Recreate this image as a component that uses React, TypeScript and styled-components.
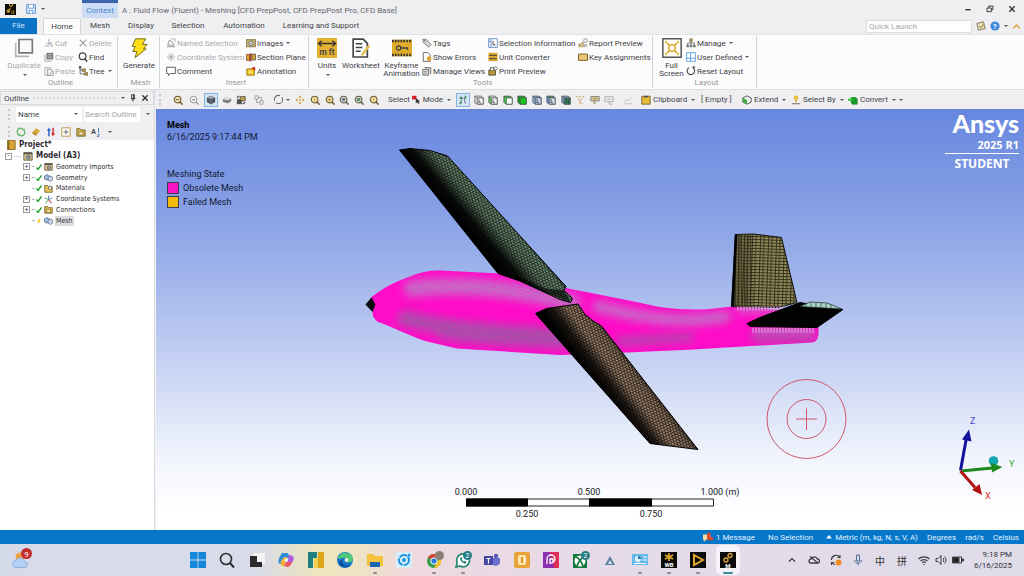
import React from "react";
import styled, { createGlobalStyle, css } from "styled-components";

const GlobalStyle = createGlobalStyle`
  * { box-sizing: border-box; }
  html, body, #root { height: 100%; }
  body { margin: 0; overflow: hidden; }
  body, button, input, select {
    font-family: Roboto, "Noto Sans CJK SC", sans-serif;
    font-size: 8px;
    color: #3f3f46;
  }
  button { border: 0; background: none; padding: 0; margin: 0; white-space: nowrap; }
  ul { list-style: none; margin: 0; padding: 0; }
`;

const GOLD = "#d9a62e";

/* ---------- icons ---------- */

const lens = (color: string, inner: React.ReactNode) => (
  <>
    <circle cx="5.5" cy="5.5" r="4" fill="#f3e3b4" stroke={color} strokeWidth="1.3" />
    <path d="M8.5 8.5 11.5 11.5" stroke={color} strokeWidth="1.8" />
    {inner}
  </>
);

const box = (front: string, top: string, side: string, mark?: React.ReactNode) => (
  <>
    <path d="M1 1.5h7.5l2.5 2v7.5H4L1 9z" fill={side} stroke="#555" strokeWidth=".9" />
    <path d="M1 1.5h7.5l2.5 2H4z" fill={top} stroke="#555" strokeWidth=".7" />
    <path d="M4 3.5h7V11H4z" fill={front} stroke="#555" strokeWidth=".9" />
    {mark}
  </>
);

const cursor = <path d="M6 5v4.5l1.2-1 1 1.8" fill="none" stroke="#333" strokeWidth=".9" />;

const glyphs: Record<string, React.ReactNode> = {
  duplicate: (
    <>
      <path d="M1 3v8h8" fill="none" stroke="#b5b5b5" strokeWidth="1" />
      <path d="M3 .9h8v8H3z" fill="#fafafa" stroke="#77777c" strokeWidth="1" />
    </>
  ),
  cut: <path d="M1 9.5h5M6 1v7M3 7l7-1M8 9.5h3M7 6.500l3 3" fill="none" stroke="#a9a9ad" strokeWidth="1.2" />,
  copy: (
    <>
      <path d="M1 3v8h8" fill="none" stroke="#999" />
      <path d="M3 1h8v8H3z" fill="#77777b" />
      <path d="M4.500 3h5M4.500 5h5M4.500 7h5" stroke="#ccc" strokeWidth=".8" />
    </>
  ),
  paste: (
    <>
      <path d="M1 2h7v9H1z" fill="none" stroke="#a5a5a9" />
      <path d="M4 4h4l3 2v5.500H4z" fill="#f5f5f5" stroke="#8f8f94" />
      <path d="M5 8l2 2 3-4" fill="none" stroke="#999" />
    </>
  ),
  del: <path d="M2 2l8 8M10 2l-8 8" stroke="#9a9a9e" strokeWidth="1.4" />,
  find: (
    <>
      <circle cx="5.500" cy="5" r="4" fill="none" stroke="#444" strokeWidth="1.5" />
      <path d="M8 8l3 3.500" stroke="#444" strokeWidth="1.9" />
    </>
  ),
  tree: (
    <>
      <path d="M2.500 2v7.500h6M2.500 5h4" fill="none" stroke="#555" />
      <path d="M1 0h3v3H1z" fill="#555" />
      <path d="M5 3.500h4v3H5zM8 8h4v3H8z" fill={GOLD} stroke="#555" strokeWidth=".8" />
    </>
  ),
  bolt: <path d="M4 .5h6L8 3.800h2.900L8.600 6.500h1.700L3.700 11.800l1-3.700H2.300l1.500-3H1.900z" fill="#ffe01a" stroke="#7a6c1c" strokeWidth=".6" />,
  named: (
    <>
      <path d="M1 10.500h10M2 8.500l2-6 3 2 3 4z" fill="none" stroke="#98989c" strokeWidth="1.2" />
      <path d="M6 1h5v4" fill="none" stroke="#a8a8ac" />
    </>
  ),
  coord: <path d="M6 1v10M1 6h10M2.500 2.500l7 7M9.500 2.500l-7 7" stroke="#a5a5a9" strokeWidth="1" />,
  comment: <path d="M.8 1.500h10.400v7.500H5.500L3 11.300V9H.8z" fill="#fff" stroke="#555" strokeWidth="1.1" />,
  images: (
    <>
      <path d="M.5 2h11v8.500H.5z" fill="#c9b277" stroke="#7c6a3b" />
      <circle cx="6" cy="6.300" r="2.600" fill="#fff" stroke="#555" />
      <circle cx="6" cy="6.300" r="1" fill="#555" />
    </>
  ),
  section: (
    <>
      <path d="M.5 3h4v7h-4z" fill={GOLD} stroke="#6b2318" strokeWidth=".8" />
      <path d="M4.500 1.500h2v10h-2z" fill="#b4342a" />
      <path d="M7 2.500h4.500v7H7z" fill="#d9a62e" stroke="#444" strokeWidth=".9" />
    </>
  ),
  annotation: (
    <>
      <path d="M1 3.500h9v7.500H1z" fill="#f0c81e" stroke="#8a6c12" />
      <path d="M6 2.500 11 1v5z" fill="#d0382a" />
      <path d="M3 6h4M3 8h5" stroke="#fff6c0" strokeWidth=".9" />
    </>
  ),
  units: (
    <>
      <path d="M0 0h12v12H0z" fill="#e3b232" />
      <path d="M.8 3.300h10.400M2.800 1.600.8 3.300l2 1.700M9.200 1.600l2 1.700-2 1.700" fill="none" stroke="#333" strokeWidth=".8" />
      <text x="6" y="10.400" textAnchor="middle" fontSize="5" fontWeight="600" fill="#444">m ft</text>
    </>
  ),
  worksheet: (
    <>
      <path d="M1.300.7h6l2.500 2.500v8.200H1.300z" fill="#fff" stroke="#444" strokeWidth="1" />
      <path d="M2.800 3.500h4M2.800 5.700h4M2.800 7.900h3" stroke="#444" strokeWidth=".9" />
      <path d="M11 4.500 6.500 10.300" stroke="#e3c04a" strokeWidth="1.400" />
    </>
  ),
  keyframe: (
    <>
      <path d="M0 1h12v10H0z" fill="#e0ac2c" />
      <path d="M0 1.800h12M0 10.200h12" stroke="#333" strokeWidth="1.500" strokeDasharray="1 .7" />
      <circle cx="4" cy="6" r="1.300" fill="none" stroke="#444" strokeWidth=".8" />
      <path d="M5.300 6h4v1.200" fill="none" stroke="#444" strokeWidth=".8" />
    </>
  ),
  tags: (
    <>
      <path d="M1 1.500h4L11 8 8 11 1.500 5.500z" fill="#d6d6d2" stroke="#666" strokeWidth=".9" />
      <circle cx="3.300" cy="3.600" r=".9" fill="#555" />
    </>
  ),
  errors: (
    <>
      <path d="M1.500.8h5.500l3 2.700v7.700h-8.500z" fill="#fff" stroke="#555" />
      <circle cx="8.500" cy="8" r="2.800" fill={GOLD} />
    </>
  ),
  views: (
    <>
      <path d="M1 4h7v7H1zM3 2h7.500v7.500" fill="#dfe6da" stroke="#555" />
      <path d="M2.500 6.500H6M2.500 8.500H6" stroke="#666" strokeWidth=".8" />
    </>
  ),
  selinfo: (
    <>
      <path d="M.8.800h10.400v10.400H.8z" fill="#fff" stroke="#4f7fc4" />
      <path d="M3.500 1v10M1 4h2" stroke="#4f7fc4" />
      <path d="M6 3.500v5l1.500-1.200 1 2" fill="none" stroke="#333" />
    </>
  ),
  unitconv: (
    <>
      <path d="M.5 1h11v10H.5z" fill={GOLD} />
      <path d="M1.500 4h9M1.500 8h9" stroke="#444" strokeWidth="1.200" />
    </>
  ),
  print: (
    <>
      <path d="M1 5h8v6H1z" fill="#b79a3c" stroke="#4a4330" />
      <path d="M3 5V2h4v3" fill="#fff" stroke="#444" />
      <circle cx="9" cy="3" r="2" fill="none" stroke="#777" />
    </>
  ),
  report: (
    <>
      <path d="M1 11V7h2v4M4.500 11V5h2v6" fill={GOLD} stroke="#999" strokeWidth=".7" />
      <circle cx="9" cy="3" r="2.200" fill="none" stroke="#888" />
      <path d="M8 11V8h2v3" fill="none" stroke="#888" />
    </>
  ),
  keys: <path d="M.6 2.500h10.800v7.500H.6z" fill="#e8c874" stroke="#7b6126" strokeWidth="1.200" />,
  full: (
    <>
      <path d="M.5.500h11v11H.5z" fill="#fffdf4" stroke="#55555a" strokeWidth=".9" />
      <path d="M4.200 4.200h3.600v3.600H4.200zM2 2l2.200 2.200M10 2 7.800 4.200M2 10l2.200-2.200M10 10 7.800 7.800" fill="none" stroke="#dca62c" strokeWidth=".9" />
    </>
  ),
  manage: (
    <>
      <path d="M6 3.500V6M2 9V6h8v3M6 6v3" fill="none" stroke="#666" />
      <path d="M4.500 1h3v3h-3z" fill={GOLD} stroke="#555" strokeWidth=".7" />
      <path d="M.5 8h3v3h-3zM4.500 8h3v3h-3zM8.500 8h3v3h-3z" fill="#777" />
    </>
  ),
  userdef: <path d="M.8.800h10.400v10.400H.8zM5.500 1v10M1 7.500h10" fill="#fff" stroke="#5b9bdc" strokeWidth="1.100" />,
  reset: (
    <>
      <path d="M8.500 2.200A4.500 4.500 0 1 1 3.500 2" fill="none" stroke="#444" strokeWidth="1.300" />
      <path d="M7.500.200 11.300.800 8.800 4z" fill="#444" />
    </>
  ),
  zoomout: lens("#6b5a2a", <path d="M3.500 5.500h4" stroke="#444" />),
  zoomgrey: (
    <>
      <circle cx="5.500" cy="5.500" r="4" fill="#f4f4f4" stroke="#9a9a9e" strokeWidth="1.200" />
      <path d="M8.500 8.500 11.500 11.500M3.500 5.500h4" stroke="#9a9a9e" strokeWidth="1.500" />
    </>
  ),
  zoombox: lens("#6b5a2a", <path d="M5.500 3.500v4" stroke={GOLD} strokeWidth="1.500" />),
  zoomplus: lens("#6b5a2a", <path d="M5.500 3.300v4.400M3.300 5.500h4.400" stroke="#b07c10" />),
  zoomblue: lens("#5d5d55", <circle cx="5.500" cy="5.500" r="2.200" fill="#5f83a8" />),
  zoomgreen: lens("#5d5d55", <circle cx="5.500" cy="5.500" r="2.200" fill="#4c8b7b" />),
  cube: (
    <>
      <path d="M6 .8 11 3v5.500L6 11.300 1 8.500V3z" fill="#4d5560" />
      <path d="M6 .8 11 3 6 5.200 1 3z" fill="#99a3ae" />
      <path d="M6 5.200v6" stroke="#aab" strokeWidth=".6" />
    </>
  ),
  slab: (
    <>
      <path d="M1 5 5 3l6 1.500v3L7 10 1 8z" fill="#77797c" />
      <path d="M1 5 5 3l6 1.500L7 6.500z" fill="#dcdcdc" />
    </>
  ),
  rotcube: (
    <>
      <path d="M1 5h6v6H1z" fill="#555" />
      <path d="M5 2h6v5H5z" fill="#c9a850" stroke="#333" strokeWidth=".9" />
      <path d="M1 3.500 4 1M8 11l3-2.500" stroke="#333" strokeWidth="1.300" />
    </>
  ),
  linkgrey: <path d="M1 1h4v4H1zM7 7h4v4H7zM3 5v4h4M5 3h4v4" fill="none" stroke="#9a9a9e" />,
  rotate: <circle cx="6" cy="6" r="4.500" fill="none" stroke="#666" strokeWidth="1.100" strokeDasharray="10 2.500" />,
  pan: <path d="M6 .5 8 3H4zM6 11.500 4 9h4zM.5 6 3 4v4zM11.500 6 9 8V4zM5 5h2v2H5z" fill="#c99526" />,
  mode: (
    <>
      <path d="M0 1h6v5H0z" fill="#d0202a" />
      <path d="M5 4v7l2-1.500L8.500 12 10 11 8.600 8.800H11z" fill="#333" />
    </>
  ),
  seldots: (
    <>
      <path d="M2 2h3v3H2zM8 1h2v3H8zM2 8h2v3H2z" fill="#3c8f57" />
      <path d="M5 4h4M4 6v3M8 5v4l2 1" fill="none" stroke="#333" strokeDasharray="1.500 .7" />
    </>
  ),
  boxPlain: box("#f4f4f4", "#fff", "#ddd", cursor),
  boxEdge: box("#f4f4f4", "#fff", "#5fc05f", cursor),
  boxTop: box("#f6fff6", "#3fc83f", "#3fc83f"),
  boxGreen: box("#10cf1c", "#18b520", "#0c9a18"),
  boxBlue: box("#bcd2ec", "#7fa5d6", "#7fa5d6", cursor),
  boxBlueTop: box("#cfdcec", "#3f9a5a", "#5f8fd0", cursor),
  boxMesh: box("#3c8f57", "#8fb8d8", "#6f94b8", <path d="M4 6h7M4 8.500h7M6.500 4v7M9 4v7" stroke="#234" strokeWidth=".6" />),
  ydots: <path d="M1 2h2M5 2h2M9 2h2M3 4l3 3 3-3M6 7v4M7.500 10.500h2" fill="none" stroke="#c19a45" strokeWidth="1.100" />,
  tag2: (
    <>
      <path d="M1 2h10v5H1z" fill="#e8d9a8" stroke="#666" />
      <path d="M3 4.500h6M5 7v4l2-2" stroke="#8a6a20" fill="none" />
    </>
  ),
  grey2: <path d="M1 2h10v6H1zM3 5h6M6 8v3h4" fill="none" stroke="#a5a5a9" />,
  chart: <path d="M1 10.500h10M1 8l3-2 2 1 4-4" fill="none" stroke="#b9b9bd" />,
  clip: (
    <>
      <path d="M1 1.500h10V11H1z" fill="#e8bd3a" stroke="#6b5520" />
      <path d="M3.500 1h5v2h-5z" fill="#555" />
    </>
  ),
  extend: (
    <>
      <path d="M6 1 11 3.500v5L6 11 1 8.500v-5z" fill="#eef6ee" stroke="#444" />
      <path d="M1 3.500 6 6v5L1 8.500z" fill="#3fae3f" />
    </>
  ),
  selby: (
    <>
      <circle cx="6" cy="3.500" r="2.800" fill="#eac23c" />
      <path d="M6 6v3" stroke="#c99526" strokeWidth="1.500" />
      <path d="M1 10.500h10" stroke="#555" />
    </>
  ),
  convert: (
    <>
      <path d="M4 3h5l2 1.500V11H5L4 9z" fill="#16a026" stroke="#0a6b17" strokeWidth=".7" />
      <path d="M0 4.500h3V3l3 2.700L3 8.500V7H0z" fill="#35c23f" />
    </>
  ),
  refresh: (
    <>
      <path d="M2 7.500A4 4 0 0 1 9 3.500M10 4.500A4 4 0 0 1 3 8.500" fill="none" stroke="#5fb85f" strokeWidth="1.500" />
      <path d="M7.500 4.500h3V1.500zM4.500 7.500h-3v3z" fill="#5fb85f" />
    </>
  ),
  eraser: (
    <>
      <path d="M1 7 6 1.500l5 3L6 10.500z" fill="#d7a740" />
      <path d="M1 7l5 3.500V8z" fill="#9a742a" />
    </>
  ),
  updown: (
    <>
      <path d="M3.500 11V3" stroke="#2c62c8" strokeWidth="1.800" />
      <path d="M1 4.500 3.500 1 6 4.500z" fill="#2c62c8" />
      <path d="M8.500 1v8" stroke="#d02a2a" strokeWidth="1.800" />
      <path d="M6 7.500 8.500 11 11 7.500z" fill="#d02a2a" />
    </>
  ),
  expand: (
    <>
      <path d="M1 1h10v10H1z" fill="#fff" stroke="#b98a2a" />
      <path d="M6 3v6M3 6h6" stroke="#555" />
    </>
  ),
  folder: (
    <>
      <path d="M1 2h4l1 1.500h5V11H1z" fill="#d9b148" stroke="#6b5a24" />
      <path d="M3.500 6h5v3.500h-5z" fill="#fff3c6" stroke="#6b5a24" strokeWidth=".7" />
    </>
  ),
  az: (
    <>
      <text x="0" y="8" fontSize="9" fontWeight="600" fill="#444">A</text>
      <text x="7" y="12" fontSize="7" fontWeight="600" fill="#3468b8">z</text>
      <path d="M9 1v6" stroke="#3468b8" />
    </>
  ),
  project: (
    <>
      <path d="M2 .5h9v11H2z" fill="#d6a534" stroke="#765a18" />
      <path d="M2 .5h2v11H2z" fill="#8a6718" />
    </>
  ),
  model: (
    <>
      <path d="M1 2h10v9H1z" fill="#d9c48a" stroke="#5b503a" />
      <path d="M1 2h10v2H1z" fill="#555" />
      <circle cx="6.500" cy="7.500" r="2.300" fill="#8f9ba8" stroke="#444" strokeWidth=".7" />
    </>
  ),
  meshes: (
    <>
      <path d="M.5 4 4 2l3.500 2v4L4 9.500.5 8z" fill="#9fbadb" stroke="#44597a" strokeWidth=".8" />
      <path d="M5.500 5.500 8.500 4l3 1.500v4l-3 1.700-3-1.700z" fill="#c8d6e6" stroke="#44597a" strokeWidth=".8" />
    </>
  ),
  materials: (
    <>
      <path d="M1 2h4l1 1.500h5V11H1z" fill="#e5c45c" stroke="#6b5a24" />
      <circle cx="8" cy="5" r="2.200" fill="#fff" stroke="#333" strokeWidth=".8" />
    </>
  ),
  axes: (
    <>
      <path d="M6 1v5M6 6l5-2" stroke="#4a78d0" strokeWidth="1.200" />
      <path d="M1 4l5 2-4 5" fill="none" stroke="#3fae5a" strokeWidth="1.200" />
      <path d="M6 6l4 5" stroke="#d0344a" strokeWidth="1.500" />
    </>
  ),
  app: (
    <>
      <path d="M0 0h12v12H0z" fill="#0c0b08" />
      <path d="M3 9.500 6 4M6.500 2.500a1.700 1.700 0 1 1 .1 0zM3.500 9a1.300 1.300 0 1 1 .1 0z" stroke="#e0a92c" strokeWidth="1.100" fill="none" />
      <path d="M7.500 7v4M9.500 7v4" stroke="#e0a92c" strokeWidth=".8" />
    </>
  ),
  save: (
    <>
      <path d="M.8.800h10.400v10.400H.8z" fill="#dcebfa" stroke="#5b93d6" strokeWidth="1.200" />
      <path d="M3 1v4h6V1M4 11V8h4v3" fill="#fff" stroke="#5b93d6" />
    </>
  ),
  note: (
    <>
      <path d="M1 3 9 1l2 8-8 2z" fill="#efe3bb" stroke="#77705c" strokeWidth="1.100" />
      <path d="M4 6l2 2 3-4" fill="none" stroke="#8a6a20" strokeWidth="1.200" />
    </>
  ),
  help: (
    <>
      <circle cx="6" cy="6" r="5.500" fill="#3f8ad8" />
      <text x="6" y="9" textAnchor="middle" fontSize="8" fontWeight="700" fill="#fff">?</text>
    </>
  ),
  collapse: <path d="M1.500 8.500 6 4l4.500 4.500" fill="none" stroke="#e0a030" strokeWidth="1.700" />,
  min: <path d="M2 7h8" stroke="#333" strokeWidth="2" />,
  restore: <path d="M4 4V1.500h6.500V7H8M1.500 4.500H8V10H1.500z" fill="none" stroke="#333" strokeWidth="1.400" />,
  close: <path d="M2 2l8 8M10 2l-8 8" stroke="#333" strokeWidth="2" />,
  pin: <path d="M4 1h4v6H4zM2.500 7h7M6 7v4.500M7 1v6" fill="none" stroke="#333" strokeWidth="1.400" />,
};

const Svg = styled.svg<{ $s: number }>`
  width: ${(p) => p.$s}px;
  height: ${(p) => p.$s}px;
  flex: none;
  display: block;
`;

const Icon = ({ name, size = 10 }: { name: string; size?: number }) => (
  <Svg $s={size} viewBox="0 0 12 12" aria-hidden="true">{glyphs[name]}</Svg>
);

const Caret = styled.i`
  flex: none;
  border: 2px solid transparent;
  border-top-color: #55555a;
  border-bottom: 0;
  margin-left: 2px;
`;

/* ---------- shell ---------- */

const Shell = styled.div`
  height: 100vh;
  display: flex;
  flex-direction: column;
  background: #efeff2;
`;

const TitleBar = styled.header`
  display: flex;
  align-items: center;
  height: 18px;
  padding: 0 8px 0 5px;
  gap: 6px;
  flex: none;
`;

const QuickAccess = styled.div`
  display: flex;
  align-items: center;
  gap: 3px;
  width: 71px;

  button:first-of-type { margin-left: 7px; }
`;

const ContextTab = styled.div`
  width: 36px;
  height: 18px;
  line-height: 15px;
  border-top: 3px solid #3a62ad;
  background: #ccdcf5;
  color: #4a83cf;
  text-align: center;
`;

const WindowTitle = styled.h1`
  margin: 0 auto 0 -2px;
  font-size: 8px;
  font-weight: 400;
  color: #66666c;
  padding-top: 2px;
`;

const WindowButtons = styled.div`
  display: flex;
  gap: 14px;
`;

const TabBar = styled.nav`
  display: flex;
  align-items: stretch;
  height: 16px;
  flex: none;
`;

const Tab = styled.button<{ $kind?: "file" | "active"; $w: number }>`
  width: ${(p) => p.$w}px;
  line-height: 16px;
  ${(p) => p.$kind === "file" && css`
    background: #0a73c4;
    color: #cfe6fa;
    margin-right: 6px;
  `}
  ${(p) => p.$kind === "active" && css`
    background: #fcfcfc;
    border: 1px solid #d5d5d9;
    border-bottom: 0;
    line-height: 15px;
  `}
`;

const LaunchArea = styled.div`
  margin-left: auto;
  display: flex;
  align-items: center;
  gap: 4px;
  padding-right: 3px;
`;

const LaunchInput = styled.input`
  width: 106px;
  height: 13px;
  border: 1px solid #dddde0;
  background: #fff;
  padding: 0 2px;
  &::placeholder { color: #a5a5aa; opacity: 1; }
`;

/* ---------- ribbon ---------- */

const RibbonBar = styled.section`
  display: flex;
  height: 56px;
  flex: none;
  background: #fcfcfc;
  border-top: 1px solid #e2e2e6;
  border-bottom: 1px solid #dcdce0;
  padding-top: 1px;
`;

const RibbonGroup = styled.div<{ $w: number }>`
  width: ${(p) => p.$w}px;
  height: 52px;
  padding-left: 4px;
  border-right: 1px solid #d3d3d7;
  display: flex;
  flex-direction: column;
`;

const GroupBody = styled.div`
  display: flex;
  height: 42px;
`;

const GroupLabel = styled.div`
  text-align: center;
  line-height: 9px;
  color: #97979c;
`;

const BigButton = styled.button<{ $w: number; $off?: boolean }>`
  width: ${(p) => p.$w}px;
  flex: none;
  display: flex;
  flex-direction: column;
  align-items: center;
  white-space: pre-line;
  line-height: 8px;
  gap: 4px;
  padding-top: 2px;
  color: ${(p) => (p.$off ? "#a9a9ad" : "#3f3f46")};
`;

const Column = styled.div<{ $w: number }>`
  width: ${(p) => p.$w}px;
  flex: none;
  display: flex;
  flex-direction: column;
`;

const RowButton = styled.button<{ $off?: boolean }>`
  display: flex;
  align-items: center;
  height: 14px;
  gap: 1px;
  color: ${(p) => (p.$off ? "#a9a9ad" : "#3f3f46")};
`;

type Item = [icon: string, text: string, flag?: "off" | "menu"];

const Rows = ({ w, items }: { w: number; items: Item[] }) => (
  <Column $w={w}>
    {items.map(([icon, text, flag]) => (
      <RowButton key={text} $off={flag === "off"}>
        <Icon name={icon} />
        {text}
        {flag === "menu" && <Caret />}
      </RowButton>
    ))}
  </Column>
);

const Big = ({ w, icon, text, off, menu, size = 20 }: { w: number; icon: string; text: string; off?: boolean; menu?: boolean; size?: number }) => (
  <BigButton $w={w} $off={off}>
    <Icon name={icon} size={size} />
    <span>{text}</span>
    {menu && <Caret />}
  </BigButton>
);

const Ribbon = () => (
  <RibbonBar>
    <RibbonGroup $w={118}>
      <GroupBody>
        <Big w={40} icon="duplicate" text="Duplicate" off menu />
        <Rows w={34} items={[["cut", "Cut", "off"], ["copy", "Copy", "off"], ["paste", "Paste", "off"]]} />
        <Rows w={38} items={[["del", "Delete", "off"], ["find", "Find"], ["tree", "Tree", "menu"]]} />
      </GroupBody>
      <GroupLabel>Outline</GroupLabel>
    </RibbonGroup>
    <RibbonGroup $w={42}>
      <GroupBody><Big w={34} icon="bolt" text="Generate" /></GroupBody>
      <GroupLabel>Mesh</GroupLabel>
    </RibbonGroup>
    <RibbonGroup $w={149}>
      <GroupBody>
        <Column $w={2} />
        <Rows w={80} items={[["named", "Named Selection", "off"], ["coord", "Coordinate System", "off"], ["comment", "Comment"]]} />
        <Rows w={62} items={[["images", "Images", "menu"], ["section", "Section Plane"], ["annotation", "Annotation"]]} />
      </GroupBody>
      <GroupLabel>Insert</GroupLabel>
    </RibbonGroup>
    <RibbonGroup $w={344}>
      <GroupBody>
        <Big w={28} icon="units" text="Units" menu />
        <Big w={40} icon="worksheet" text="Worksheet" />
        <Big w={41} icon="keyframe" text={"Keyframe\nAnimation"} />
        <Rows w={66} items={[["tags", "Tags"], ["errors", "Show Errors"], ["views", "Manage Views"]]} />
        <Rows w={90} items={[["selinfo", "Selection Information"], ["unitconv", "Unit Converter"], ["print", "Print Preview"]]} />
        <Rows w={72} items={[["report", "Report Preview"], ["keys", "Key Assignments"]]} />
      </GroupBody>
      <GroupLabel>Tools</GroupLabel>
    </RibbonGroup>
    <RibbonGroup $w={104}>
      <GroupBody>
        <Big w={29} icon="full" text={"Full\nScreen"} />
        <Rows w={68} items={[["manage", "Manage", "menu"], ["userdef", "User Defined", "menu"], ["reset", "Reset Layout"]]} />
      </GroupBody>
      <GroupLabel>Layout</GroupLabel>
    </RibbonGroup>
  </RibbonBar>
);

/* ---------- work area ---------- */

const Work = styled.main`
  flex: 1;
  min-height: 0;
  display: flex;
`;

const Side = styled.aside`
  width: 155px;
  flex: none;
  display: flex;
  flex-direction: column;
  padding-top: 1px;
  border-right: 1px solid #dcdce2;
`;

const PaneHeader = styled.div`
  display: flex;
  align-items: center;
  gap: 4px;
  height: 14px;
  padding: 0 4px 0 3px;
  border: 1px solid #dadade;

  h2 { margin: 0; font-size: 8px; font-weight: 400; }
`;

const DotLine = styled.span`
  flex: 1;
  border-top: 2px dotted #d6d6da;
`;

const Grip = styled.span`
  width: 3px;
  height: 11px;
  border-left: 2px dotted #c6c6cb;
  flex: none;
`;

const FilterRow = styled.div`
  display: flex;
  align-items: center;
  height: 18px;
  padding: 0 4px 0 8px;
  gap: 2px;
`;

const NameSelect = styled.div`
  width: 66px;
  margin-left: 3px;
  background: #fff;
  display: flex;
  align-items: center;
  padding-right: 4px;

  select {
    flex: 1;
    height: 15px;
    appearance: none;
    border: 0;
    background: transparent;
    padding: 0 2px;
  }
`;

const SearchInput = styled.input`
  flex: 1;
  min-width: 0;
  height: 15px;
  border: 0;
  margin-right: 2px;
  padding: 0 1px;
  &::placeholder { color: #a5a5aa; opacity: 1; }
`;

const TreeTools = styled.div`
  display: flex;
  align-items: center;
  gap: 5px;
  height: 17px;
  padding-left: 8px;
`;

const TreeBox = styled.div`
  flex: 1;
  background: #fff;
`;

const Tree = styled.ul`
  display: grid;
  grid-template-rows: repeat(8, 1fr);
  height: 86px;
  font-family: "DejaVu Sans Condensed", "Noto Sans", sans-serif;
`;

const Node = styled.li<{ $depth: number; $selected?: boolean }>`
  display: flex;
  align-items: center;
  gap: 2px;
  padding-left: ${(p) => [6, 5, 23][p.$depth]}px;
  font-weight: ${(p) => (p.$depth < 2 ? 700 : 400)};
  font-size: ${(p) => (p.$depth < 2 ? 8 : 7)}px;
  color: #2c2c30;

  span { line-height: 10px; padding: 0 1px; background: ${(p) => (p.$selected ? "#dedee0" : "none")}; }
`;

const Toggle = styled.button<{ $blank?: boolean }>`
  width: 7px;
  height: 7px;
  flex: none;
  border: 1px solid #9a9aa0;
  font-size: 7px;
  line-height: 4px;
  visibility: ${(p) => (p.$blank ? "hidden" : "visible")};
`;

const Branch = styled.i<{ $w: number }>`
  width: ${(p) => p.$w}px;
  border-top: 1px dotted #b5b5ba;
`;

const Check = ({ bolt }: { bolt?: boolean }) => (
  <Svg $s={6} viewBox="0 0 6 6" aria-hidden="true">
    {bolt ? <path d="M4 0 1 3.500h1.500L1.500 6 5 2.500H3.500z" fill="#f0c020" /> : <path d="M.5 3.500 2 5.500 5.500.5" fill="none" stroke="#25a53a" strokeWidth="1.400" />}
  </Svg>
);

const leaves: [string, string, boolean][] = [
  ["model", "Geometry Imports", true],
  ["meshes", "Geometry", true],
  ["materials", "Materials", false],
  ["axes", "Coordinate Systems", true],
  ["folder", "Connections", true],
  ["meshes", "Mesh", false],
];

const Outline = () => (
  <Side>
    <PaneHeader>
      <h2>Outline</h2>
      <DotLine />
      <Caret />
      <button aria-label="Pin"><Icon name="pin" size={8} /></button>
      <button aria-label="Close pane"><Icon name="close" size={8} /></button>
    </PaneHeader>
    <FilterRow>
      <Grip />
      <NameSelect>
        <select aria-label="Filter by" defaultValue="Name"><option>Name</option></select>
        <Caret />
      </NameSelect>
      <SearchInput aria-label="Search Outline" placeholder="Search Outline" />
      <Caret />
    </FilterRow>
    <TreeTools>
      <Grip />
      {["refresh", "eraser", "updown", "expand", "folder", "az"].map((n) => (
        <button key={n} aria-label={n}><Icon name={n} size={10} /></button>
      ))}
      <Caret />
    </TreeTools>
    <TreeBox>
      <Tree>
        <Node $depth={0}><Icon name="project" /><span>Project*</span></Node>
        <Node $depth={1}><Toggle aria-label="Collapse">-</Toggle><Branch $w={7} /><Icon name="model" /><span>Model (A3)</span></Node>
        {leaves.map(([icon, text, open]) => (
          <Node key={text} $depth={2} $selected={text === "Mesh"}>
            <Toggle $blank={!open} aria-label="Expand">+</Toggle>
            <Branch $w={2} />
            <Check bolt={text === "Mesh"} />
            <Icon name={icon} size={9} />
            <span>{text}</span>
          </Node>
        ))}
      </Tree>
    </TreeBox>
  </Side>
);

const Stage = styled.section`
  flex: 1;
  min-width: 0;
  display: flex;
  flex-direction: column;
  padding-left: 1px;
`;

const ToolStrip = styled.div`
  display: flex;
  align-items: center;
  height: 19px;
  flex: none;
  padding-left: 3px;
`;

const ToolGroup = styled.div<{ $w: number; $ml?: number }>`
  display: flex;
  align-items: center;
  justify-content: space-between;
  flex: none;
  width: ${(p) => p.$w}px;
  margin-left: ${(p) => p.$ml ?? 0}px;
`;

const ToolButton = styled.button<{ $on?: boolean }>`
  display: flex;
  align-items: center;
  gap: 2px;
  ${(p) => p.$on && css`
    padding: 1px;
    background: #d4e6f8;
    outline: 1px solid #84b4e2;
  `}
`;

const Tools = ({ w, ml, names, on }: { w: number; ml?: number; names: string[]; on?: string }) => (
  <ToolGroup $w={w} $ml={ml}>
    {names.map((n, i) => (
      <ToolButton key={i} $on={n === on} aria-label={n}><Icon name={n} size={10} /></ToolButton>
    ))}
  </ToolGroup>
);

const Canvas = styled.div`
  flex: 1;
  min-height: 0;
  position: relative;
  overflow: hidden;
  background: linear-gradient(#6787df 0%, #89a2e6 26%, #c0cdf2 57%, #d6dff6 69%, #f2f5fd 83%, #fff 96%);
`;

const Scene = styled.svg`
  position: absolute;
  inset: 0;
  width: 100%;
  height: 100%;
`;

const Legend = styled.div`
  position: relative;
  padding: 10px 11px;
  display: flex;
  flex-direction: column;
  color: #101830;
  font-size: 9px;
  line-height: 12px;

  strong { color: #000; }
`;

const StateList = styled.div`
  margin-top: 24px;
  display: flex;
  flex-direction: column;
  line-height: 14px;
`;

const Swatch = styled.i<{ $c: string }>`
  width: 12px;
  height: 12px;
  background: ${(p) => p.$c};
  border: 1px solid #3c3c50;
  margin-right: 4px;
`;

const StateRow = styled.div`
  display: flex;
  align-items: center;
`;

const Brand = styled.div`
  position: absolute;
  right: 5px;
  top: 0;
  width: 74px;
  color: #fff;
  font-family: "Open Sans", sans-serif;
  font-weight: 700;
  text-align: right;
  font-size: 11px;
  line-height: 13px;

  b { display: block; font-family: Lato, sans-serif; font-weight: 900; font-size: 25px; line-height: 29px; }
  hr { border: 0; border-top: 1px solid #fff; margin: 2px 0; }
  small { display: block; font-size: 12px; line-height: 15px; text-align: center; }
`;

const wingA = "M399.500 150.500 410 149 430 151 447.500 156.500 566 287 564 291 572.500 299 570.500 303 560 300 545 293 520 281.500 498 274Z";
const wingB = "M535.500 314 546.500 309 578 304.500 585 315 593 321.500 601.500 326.500 698 450 650 444Z";
const body = "M371 298C382 289 395 282 410 277C422 272 430 271 440 271L500 274 573 290C600 295 630 301 657 307C675 310 690 310 705 310L732 307 805 312C815 316 819 322 818.500 330C819 340 816 343 811 343L693 350 627 353 560 355.500 457 349 427 342C410 337 395 328 377 322L373 317Z";
const fin = "M735.500 235 753 234.500 781.500 238 797 303 778 308 731.500 307Z";
const cells = "M.5.800 2.300.200 4.300.900V2.300L2.400 3 .5 2.400zM-2 3.800-.2 3.200 1.800 3.900V5.300L-.1 6-2 5.400zM3 3.800 4.800 3.200 6.800 3.900V5.300L4.900 6 3 5.400z";

const Airplane = () => (
  <Scene viewBox="156 109 868 422" preserveAspectRatio="xMidYMid slice" role="img" aria-label="Aircraft mesh">
    <defs>
      <pattern id="hexGreen" width="5" height="6" patternUnits="userSpaceOnUse" patternTransform="rotate(24) scale(.74)">
        <path d="M0 0h5v6H0z" fill="#0c120e" />
        <path d={cells} fill="#86ad8d" />
      </pattern>
      <pattern id="hexTan" width="5" height="6" patternUnits="userSpaceOnUse" patternTransform="rotate(24) scale(.74)">
        <path d="M0 0h5v6H0z" fill="#120d0a" />
        <path d={cells} fill="#c4a284" />
      </pattern>
      <pattern id="hexPink" width="5" height="5" patternUnits="userSpaceOnUse" patternTransform="rotate(24) scale(.9)">
        <path d="M0 0h5v5H0z" fill="#f03fd2" />
        <path d="M0 1.500 1.500.500 3.500 1 5 .2M1.500.500 1 3 2.500 4.500 4.500 3.500 3.500 1M0 3.500 1 3" fill="none" stroke="#a094bc" strokeWidth="1" />
      </pattern>
      <pattern id="hexDim" width="5" height="5" patternUnits="userSpaceOnUse" patternTransform="rotate(-16) scale(.9)">
        <path d="M0 0h5v5H0z" fill="#c631b4" />
        <path d="M0 1.500 1.500.500 3.500 1 5 .2M1.500.500 1 3 2.500 4.500 4.500 3.500 3.500 1M0 3.500 1 3" fill="none" stroke="#8e6ba0" strokeWidth="1" />
      </pattern>
      <pattern id="gridFin" width="8" height="3" patternUnits="userSpaceOnUse" patternTransform="rotate(2)">
        <path d="M0 0h8v3H0z" fill="#948b58" />
        <path d="M0 .5h8M.5 0v3M4 0v3" stroke="#2c2a1a" strokeWidth=".9" />
      </pattern>
      <pattern id="gridFine" width="3" height="3" patternUnits="userSpaceOnUse">
        <path d="M0 .5h3M.5 0v3" stroke="#2c2a1a" strokeWidth=".7" />
      </pattern>
      <linearGradient id="shadeA" gradientUnits="userSpaceOnUse" x1="451" y1="214" x2="489" y2="182">
        <stop offset="0" stopColor="#000" />
        <stop offset=".22" stopColor="#000" stopOpacity=".92" />
        <stop offset=".5" stopColor="#000" stopOpacity=".2" />
        <stop offset=".75" stopColor="#000" stopOpacity=".1" />
        <stop offset=".88" stopColor="#000" stopOpacity=".85" />
        <stop offset="1" stopColor="#000" />
      </linearGradient>
      <linearGradient id="shadeB" gradientUnits="userSpaceOnUse" x1="594" y1="381" x2="637" y2="348">
        <stop offset="0" stopColor="#000" />
        <stop offset=".2" stopColor="#000" stopOpacity=".8" />
        <stop offset=".42" stopColor="#000" stopOpacity=".1" />
        <stop offset=".65" stopColor="#000" stopOpacity=".2" />
        <stop offset=".92" stopColor="#000" />
      </linearGradient>
      <filter id="soft" x="-20%" y="-60%" width="140%" height="220%"><feGaussianBlur stdDeviation="4" /></filter>
      <mask id="upperMask" maskUnits="userSpaceOnUse" x="360" y="260" width="470" height="110">
        <g filter="url(#soft)" fill="none" stroke="#eee" strokeLinecap="round">
          <path d="M412 289C460 284 515 289 572 303" strokeWidth="17" />
          <path d="M598 307C640 318 680 325 725 317" strokeWidth="12" />
          <path d="M740 310H790M757 332H810" strokeWidth="7" />
        </g>
      </mask>
      <mask id="lowerMask" maskUnits="userSpaceOnUse" x="360" y="260" width="470" height="110">
        <g filter="url(#soft)" fill="none" stroke="#eee" strokeLinecap="round">
          <path d="M405 319C450 331 510 333 585 339" strokeWidth="16" />
          <path d="M440 335C480 342 520 343 570 345" strokeWidth="8" />
          <path d="M620 342 690 338M755 338H812" strokeWidth="8" />
        </g>
      </mask>
    </defs>

    <path d={body} fill="#ff0cc8" />
    <path d={body} fill="url(#hexPink)" mask="url(#upperMask)" />
    <path d={body} fill="url(#hexDim)" mask="url(#lowerMask)" />
    <path d="M752 331H814" stroke="#d79ad8" strokeWidth="5" strokeDasharray="2 1" opacity=".6" />
    <path d="M365.500 305 371.500 298 375.500 305 372.500 312.500Z" fill="#0a0a0a" />

    <path d={wingA} fill="url(#hexGreen)" />
    <path d={wingA} fill="url(#shadeA)" stroke="#000" />
    <path d="M498 274 520 281.500 545 293 570 302 564 291 545 289 525 280Z" fill="#000" opacity=".6" />
    <path d={wingB} fill="url(#hexTan)" />
    <path d={wingB} fill="url(#shadeB)" stroke="#000" />

    <path d={fin} fill="url(#gridFin)" stroke="#111" />
    <path d="M735.500 235 753 234.500 753 308 731.500 307Z" fill="url(#gridFine)" />
    <path d="M736 235 732.500 307" stroke="#000" strokeWidth="2.500" />
    <path d="M737 309H785" stroke="#d79ad8" strokeWidth="4" strokeDasharray="2 1" opacity=".7" />
    <path d="M747 324 760 318 800 303 843 310 817 328 750 327Z" fill="#020202" stroke="#000" />
    <path d="M800 307 810 302.500 827 303.500 842 309.500Z" fill="#a9d3c8" stroke="#1c2b28" strokeWidth=".7" />
    <path d="M806 304v3M811 303v4M816 303v5M821 303v5M826 304v4M831 305v4" stroke="#1c2b28" strokeWidth=".6" />

    <g fill="none" stroke="#d0566a" strokeWidth="1">
      <circle cx="806.500" cy="419.500" r="39.500" />
      <circle cx="806.500" cy="419.500" r="19.500" />
      <path d="M796 419.500h21M806.500 409v21.500" />
    </g>

    <g fontSize="9">
      <path d="M960.500 471 966.500 438" stroke="#12129c" strokeWidth="3" />
      <path d="M969 430 962 440 971.500 442Z" fill="#12129c" />
      <circle cx="993.500" cy="461.500" r="4.800" fill="#14a7ae" />
      <path d="M961 471.500 992 468.500" stroke="#1c8a1c" strokeWidth="3" />
      <path d="M1002.500 467.500 991 463.500 992 473Z" fill="#1c8a1c" />
      <path d="M960.500 471.500 975 488" stroke="#b01212" strokeWidth="3" />
      <path d="M982 495.500 972 490.500 979.500 484.500Z" fill="#b01212" />
      <text x="970" y="424" fill="#4848c8">Z</text>
      <text x="1009" y="467" fill="#2ca82c">Y</text>
      <text x="985" y="499" fill="#e03030">X</text>
    </g>

    <g fontSize="9" fill="#16161a" textAnchor="middle">
      <path d="M466.500 499.500h247v7h-247z" fill="#fff" stroke="#222" />
      <path d="M466 499h62v8h-62zM589 499h63v8h-63z" fill="#000" />
      <text x="466" y="495">0.000</text>
      <text x="589" y="495">0.500</text>
      <text x="720" y="495">1.000 (m)</text>
      <text x="527" y="517">0.250</text>
      <text x="651" y="517">0.750</text>
    </g>
  </Scene>
);

const Viewport = () => (
  <Stage>
    <ToolStrip>
      <Grip />
      <Tools w={26} ml={11} names={["zoomout", "zoomgrey"]} />
      <Tools w={41} ml={6} names={["cube", "slab", "rotcube"]} on="cube" />
      <Tools w={10} ml={8} names={["linkgrey"]} />
      <ToolGroup $w={17} $ml={9}>
        <ToolButton aria-label="Rotate"><Icon name="rotate" size={11} /></ToolButton>
        <Caret />
      </ToolGroup>
      <Tools w={84} ml={5} names={["pan", "zoombox", "zoomplus", "zoomblue", "zoomgreen", "zoombox"]} />
      <ToolGroup $w={63} $ml={9}>
        <span>Select</span>
        <ToolButton><Icon name="mode" size={9} />Mode<Caret /></ToolButton>
      </ToolGroup>
      <Tools
        w={157}
        ml={6}
        on="seldots"
        names={["seldots", "boxPlain", "boxEdge", "boxTop", "boxGreen", "boxBlue", "boxBlueTop", "boxMesh", "ydots", "tag2", "grey2"]}
      />
      <Tools w={10} ml={9} names={["chart"]} />
      <ToolGroup $w={52} $ml={8}><ToolButton><Icon name="clip" />Clipboard<Caret /></ToolButton></ToolGroup>
      <ToolGroup $w={33} $ml={8}><ToolButton>[ Empty ]</ToolButton></ToolGroup>
      <ToolGroup $w={45} $ml={8}><ToolButton><Icon name="extend" />Extend<Caret /></ToolButton></ToolGroup>
      <ToolGroup $w={49} $ml={4}><ToolButton><Icon name="selby" />Select By<Caret /></ToolButton></ToolGroup>
      <ToolGroup $w={55} $ml={8}><ToolButton><Icon name="convert" />Convert<Caret /></ToolButton><Caret /></ToolGroup>
    </ToolStrip>
    <Canvas>
      <Airplane />
      <Legend>
        <strong>Mesh</strong>
        <span>6/16/2025 9:17:44 PM</span>
        <StateList>
          <span>Meshing State</span>
          <StateRow><Swatch $c="#f714c4" />Obsolete Mesh</StateRow>
          <StateRow><Swatch $c="#f2ba0c" />Failed Mesh</StateRow>
        </StateList>
      </Legend>
      <Brand>
        <b>Ansys</b>
        2025 R1
        <hr />
        <small>STUDENT</small>
      </Brand>
    </Canvas>
  </Stage>
);

/* ---------- status bar and taskbar ---------- */

const StatusBar = styled.div`
  height: 14px;
  flex: none;
  display: flex;
  justify-content: flex-end;
  align-items: center;
  gap: 9px;
  padding-right: 5px;
  background: #0577cb;
  color: #e4f1fc;

  span { display: flex; align-items: center; gap: 3px; white-space: nowrap; }
  span:nth-of-type(2) { margin: 0 4px; }
`;

const TaskBar = styled.footer`
  height: 32px;
  flex: none;
  display: flex;
  align-items: center;
  padding-right: 12px;
  background: linear-gradient(90deg, #d6dbea 0%, #d9dbe9 25%, #ece5bd 31%, #efe3c4 35%, #efd9df 40%, #e6dbe8 55%, #dfdcea 100%);
`;

const Weather = styled.div`
  width: 188px;
  flex: none;
  padding-left: 12px;
`;

const Apps = styled.div`
  width: 550px;
  display: flex;
  justify-content: space-between;
`;

const AppButton = styled.button<{ $state?: "run" | "active" }>`
  width: 20px;
  height: 26px;
  display: flex;
  flex-direction: column;
  align-items: center;
  justify-content: center;
  border-radius: 3px;
  background: ${(p) => (p.$state === "active" ? "#f5f2f8" : "none")};
  box-shadow: ${(p) => (p.$state === "active" ? "0 0 0 2px #f5f2f8" : "none")};
  position: relative;

  &::after {
    content: "";
    display: ${(p) => (p.$state ? "block" : "none")};
    position: absolute;
    bottom: -1px;
    width: ${(p) => (p.$state === "active" ? 10 : 4)}px;
    height: 2px;
    border-radius: 1px;
    background: ${(p) => (p.$state === "active" ? "#3d8a9c" : "#8a8a90")};
  }
`;

const Tray = styled.div`
  margin-left: auto;
  display: flex;
  align-items: center;
  gap: 10px;
  color: #333338;
`;

const Status = styled.div`
  display: flex;
  gap: 5px;
`;

const Ime = styled.button`
  font-family: "Noto Sans CJK SC", sans-serif;
  font-size: 10px;
  width: 12px;
  color: #333338;
`;

const Clock = styled.div`
  text-align: right;
  line-height: 11px;
`;

const badge = (text: string, fill: string) => (
  <>
    <circle cx="12.500" cy="3.500" r="4.500" fill={fill} />
    <text x="12.500" y="6" textAnchor="middle" fontSize="7" fill="#fff">{text}</text>
  </>
);

const apps: [string, React.ReactNode, ("run" | "active")?][] = [
  ["Start", <path d="M0 0h7.600v7.600H0zM8.400 0H16v7.600H8.400zM0 8.400h7.600V16H0zM8.400 8.400H16V16H8.400z" fill="#1487d8" />],
  ["Search", <><circle cx="7" cy="7" r="5.500" fill="none" stroke="#2c2c30" strokeWidth="1.600" /><path d="M11 11l4 4.500" stroke="#2c2c30" strokeWidth="2" /></>],
  ["Task view", <><path d="M4 1h12v11H4z" fill="#f4f4f4" /><path d="M1 4h7v6h5v5H1z" fill="#2b2b2e" /></>],
  ["Copilot", <><path d="M4 1h6l2 5H6l-3 6C0 12 0 9 1 6z" fill="#2f8fd8" /><path d="M10 3c5 0 7 2 5 6l-2 3-4-1 2-6z" fill="#b35be0" /><path d="M3 9l3-4h3L7 14C3 15 2 12 3 9z" fill="#f2b13c" /><path d="M6 14l2-4h6c-1 4-3 5-5 5z" fill="#ec5a6c" /><circle cx="8" cy="8" r="1.600" fill="#fff" /></>],
  ["Power BI", <><path d="M0 0h9v6H5v10H0z" fill="#1f7f7c" /><path d="M6 6h5v10H6z" fill="#f0d04c" /><path d="M10 0h6v16h-6z" fill="#dba516" /></>],
  ["Edge", <><circle cx="8" cy="8" r="8" fill="#1878c8" /><path d="M1 6C3-1 15-1 16 7c0 4-5 4-6 3 1-3-2-5-5-4-2 .500-3 1-4 0z" fill="#4fc878" /><path d="M5 8c0 5 4 7 9 5-4 4-11 2-12-2 0-2 1-3 3-3z" fill="#0c4f9c" /><circle cx="9.500" cy="8" r="2" fill="#e6eedd" /></>],
  ["Explorer", <><path d="M0 2h6l2 2h8v10H0z" fill="#f6c33c" /><path d="M3 10h10v5H3z" fill="#1866b4" /></>, "run"],
  ["Assistant", <><path d="M0 0h16v16H0z" fill="#d8effb" /><circle cx="8" cy="8" r="5" fill="none" stroke="#1f94dc" strokeWidth="2" strokeDasharray="8 1" /><circle cx="8" cy="8" r="2" fill="#1f94dc" /><circle cx="13" cy="3" r="1.500" fill="#1f94dc" /></>],
  ["Chrome", <><circle cx="8" cy="9" r="7" fill="#2f9d4a" /><path d="M2 5.500A7 7 0 0 1 14 5.500L8 9z" fill="#dc3f32" /><path d="M14.500 6A7 7 0 0 1 8 16l3-6z" fill="#f4c32c" /><circle cx="8" cy="9" r="3.200" fill="#2f78e0" stroke="#fff" /><circle cx="13.500" cy="3.500" r="4.500" fill="#8c7f74" /></>, "run"],
  ["WhatsApp", <><path d="M1 15l1.200-4A6.500 6.500 0 1 1 5 14z" fill="#fff" stroke="#25856c" strokeWidth="1.700" /><path d="M5 6c0 3 3 6 6 5.500l.5-2-2-.5-.8.800-2-2 .6-1-.8-1.800z" fill="#25856c" />{badge("2", "#267d86")}</>, "run"],
  ["Teams", <><circle cx="12" cy="4" r="2.200" fill="#5458b4" /><path d="M8 6h8v4c0 4-6 5-8 2z" fill="#6a6fd0" /><path d="M0 4h9v9H0z" fill="#4348a4" /><path d="M2.500 6.500h4M4.500 6.500v5" stroke="#fff" strokeWidth="1.200" /></>],
  ["Wallet", <><rect width="16" height="16" rx="2" fill="#e9a33a" /><rect x="4" y="3" width="8" height="10" rx="2" fill="#fbe7b4" /><path d="M8 5v6" stroke="#e08a20" strokeWidth="2" /></>],
  ["Studio", <><path d="M0 0h16v16H0z" fill="#8a2fb0" /><path d="M7 0h9v16h-5z" fill="#df2c58" /><path d="M4 12V7a4 4 0 1 1 4 4h-1V7h3v4" fill="none" stroke="#fff" strokeWidth="1.300" /></>],
  ["Xbox", <><path d="M0 2h14v14H0z" fill="#14793a" /><circle cx="7" cy="9" r="5.500" fill="#fff" /><path d="M3 5c4 2 6 6 7 9M11 5c-4 2-6 6-7 9" stroke="#14793a" strokeWidth="1.700" fill="none" />{badge("2", "#267d86")}</>],
  ["Delta", <><path d="M8 4l5 9H3z" fill="#5c7f9c" /><path d="M8 8l2 4H6z" fill="#cfe3f0" /></>],
  ["Control panel", <><path d="M0 2h16v11H0z" fill="#63bce8" /><circle cx="6" cy="7" r="3" fill="#e6f6ff" /><path d="M6 7V4a3 3 0 0 1 3 3z" fill="#1d6fb0" /><path d="M11 5h4M11 8h4M2 11.500h12" stroke="#fff" /></>, "run"],
  ["Workbench", <><path d="M0 0h16v16H0z" fill="#0b0b0b" /><path d="M8 1v8M4 3l8 4M12 3 4 7" stroke="#e0a92c" strokeWidth="1.700" /><text x="8" y="15" textAnchor="middle" fontSize="6" fontWeight="700" fill="#fff">WB</text></>, "run"],
  ["Player", <><path d="M0 0h16v16H0z" fill="#0b0b0b" /><path d="M4 3l9 5-9 5z" fill="none" stroke="#e0a92c" strokeWidth="2" /></>, "run"],
  ["Meshing", <><path d="M0 0h16v16H0z" fill="#0b0b0b" /><circle cx="10" cy="3.500" r="2" fill="none" stroke="#e0a92c" strokeWidth="1.300" /><circle cx="6" cy="8" r="2" fill="none" stroke="#e0a92c" strokeWidth="1.300" /><text x="8" y="16" textAnchor="middle" fontSize="6" fontWeight="700" fill="#fff">M</text></>, "active"],
];

const TaskIcon = styled.svg`
  width: 16px;
  height: 16px;
  display: block;
  overflow: visible;
`;

const TrayIcon = styled.svg`
  width: 12px;
  height: 12px;
  display: block;
  fill: none;
  stroke: #3c3c42;
`;

const App = () => (
  <>
    <GlobalStyle />
    <Shell>
      <TitleBar>
        <QuickAccess>
          <Icon name="app" size={11} />
          <button aria-label="Save"><Icon name="save" size={10} /></button>
          <Caret />
        </QuickAccess>
        <ContextTab>Context</ContextTab>
        <WindowTitle>A : Fluid Flow (Fluent) - Meshing [CFD PrepPost, CFD PrepPost Pro, CFD Base]</WindowTitle>
        <WindowButtons>
          <button aria-label="Minimize"><Icon name="min" size={8} /></button>
          <button aria-label="Restore"><Icon name="restore" size={8} /></button>
          <button aria-label="Close"><Icon name="close" size={8} /></button>
        </WindowButtons>
      </TitleBar>
      <TabBar>
        <Tab $w={37} $kind="file">File</Tab>
        <Tab $w={38} $kind="active">Home</Tab>
        <Tab $w={38}>Mesh</Tab>
        <Tab $w={44}>Display</Tab>
        <Tab $w={50}>Selection</Tab>
        <Tab $w={62}>Automation</Tab>
        <Tab $w={92}>Learning and Support</Tab>
        <LaunchArea>
          <LaunchInput aria-label="Quick Launch" placeholder="Quick Launch" />
          <Icon name="note" />
          <ToolButton aria-label="Help"><Icon name="help" /><Caret /></ToolButton>
          <button aria-label="Collapse ribbon"><Icon name="collapse" size={9} /></button>
        </LaunchArea>
      </TabBar>
      <Ribbon />
      <Work>
        <Outline />
        <Viewport />
      </Work>
      <StatusBar>
        <span>
          <Svg $s={10} viewBox="0 0 12 12" aria-hidden="true"><path d="M0 3h9v6H4L1 12V9H0z" fill="#f4d9a0" /><path d="M5 1h4v5h3v4H5z" fill="#d8452c" /></Svg>
          1 Message
        </span>
        <span>No Selection</span>
        <span>
          <Svg $s={6} viewBox="0 0 6 6" aria-hidden="true"><path d="M0 4.500 3 1l3 3.500z" fill="#fff" /></Svg>
          Metric (m, kg, N, s, V, A)
        </span>
        <span>Degrees</span>
        <span>rad/s</span>
        <span>Celsius</span>
      </StatusBar>
      <TaskBar>
        <Weather>
          <TaskIcon viewBox="0 0 16 16" role="img" aria-label="Weather">
            <circle cx="8" cy="5" r="4.500" fill="#f0a040" />
            <path d="M4 15.500a3.500 3.500 0 0 1 0-7 4.500 4.500 0 0 1 8.500 1 3 3 0 0 1 0 6z" fill="#b4cff4" stroke="#7fa8e0" strokeWidth=".8" />
            <circle cx="14.500" cy="1.500" r="5.500" fill="#c42b2b" />
            <text x="14.500" y="4.500" textAnchor="middle" fontSize="8" fill="#fff">9</text>
          </TaskIcon>
        </Weather>
        <Apps>
          {apps.map(([name, art, state]) => (
            <AppButton key={name} aria-label={name} $state={state}>
              <TaskIcon viewBox="0 0 16 16">{art}</TaskIcon>
            </AppButton>
          ))}
        </Apps>
        <Tray>
          <TrayIcon viewBox="0 0 12 12"><path d="M3 7.500l3-3 3 3" strokeWidth="1.200" /></TrayIcon>
          <TrayIcon viewBox="0 0 12 12"><path d="M3 9h6.500a2 2 0 0 0 0-4A3.500 3.500 0 0 0 3 5a2 2 0 0 0 0 4zM2 2.500l8.500 7" strokeWidth="1.300" /></TrayIcon>
          <TrayIcon viewBox="0 0 12 12"><path d="M1.500 6a4.500 4.500 0 0 1 8-3M10 1v2.500H7.500M5 10.500a4.500 4.500 0 0 1-3-2M1.500 11V8.500H4" strokeWidth="1.100" /><circle cx="8.500" cy="8.500" r="3" fill="#f08a24" stroke="none" /></TrayIcon>
          <TrayIcon viewBox="0 0 12 12"><path d="M4.500 1h3v6h-3zM2.500 6c0 4 7 4 7 0M6 9v2.500" stroke="#4a6f94" /></TrayIcon>
          <Ime>中</Ime>
          <Ime>拼</Ime>
          <Status>
            <TrayIcon viewBox="0 0 12 12"><path d="M.5 5a8 8 0 0 1 11 0M2.500 7a5 5 0 0 1 7 0M4.300 8.700a2.500 2.500 0 0 1 3.400 0M6 10v1" strokeWidth="1.200" /></TrayIcon>
            <TrayIcon viewBox="0 0 12 12"><path d="M1 4.500h2l3-3v9l-3-3H1zM8 4c1 1 1 3 0 4M9.500 2.500c2 2 2 5 0 7" /></TrayIcon>
            <TrayIcon viewBox="0 0 12 12"><path d="M.5 3h9v6h-9z" /><path d="M1 3.500h6v5H1zM10 5h1.500v2H10z" fill="#222" /></TrayIcon>
          </Status>
          <Clock>9:18 PM<br />6/16/2025</Clock>
        </Tray>
      </TaskBar>
    </Shell>
  </>
);

export default App;
